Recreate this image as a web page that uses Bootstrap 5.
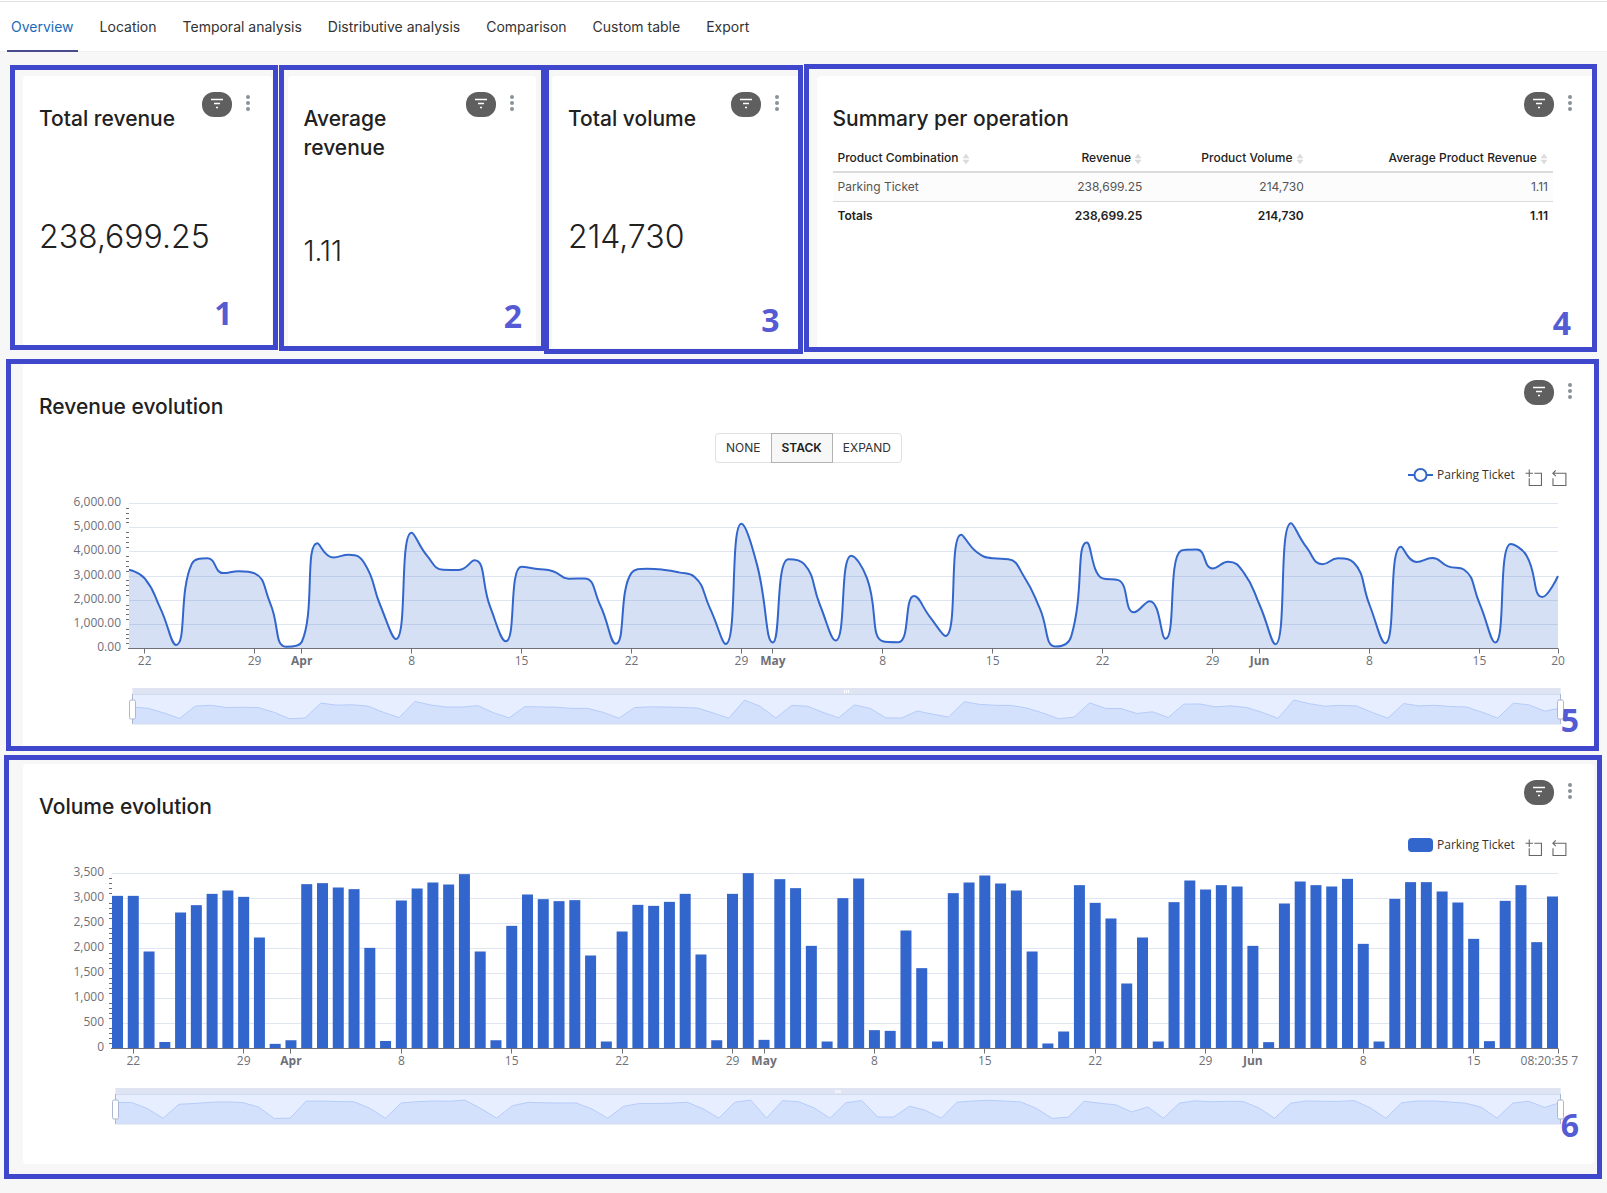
<!DOCTYPE html>
<html lang="en">
<head>
<meta charset="utf-8">
<meta name="viewport" content="width=device-width, initial-scale=1">
<title>Parking revenue dashboard</title>
<link href="https://cdn.jsdelivr.net/npm/bootstrap@5.3.0/dist/css/bootstrap.min.css" rel="stylesheet">
<style>
  body { font-family: Inter, sans-serif; font-size: 14px; background: #f7f7f7; color: #212121; border-top: 1px solid #fff; }
  .tabbar { background: #fff; border-top: 1px solid #e0e0e0; border-bottom: 1px solid #f0f0f0; padding: 0 7px; gap: 18px; height: 51px; }
  .tabbar .nav-link { color: #333; padding: 14px 4px 0; line-height: 22px; height: 50px; border-bottom: 2px solid transparent; border-radius: 0; }
  .tabbar .nav-link.active { color: #1a6bb8; border-bottom-color: #484c8c; }

  .board { padding: 24px 13px 29px 23px; grid-template-columns: repeat(6, minmax(0, 1fr)); }
  .tile { border: 0; border-radius: 4px; padding: 16px; }
  .tile-sm { min-height: 272px; }
  .span-3 { grid-column: span 3; }
  .span-6 { grid-column: span 6; }
  .tile-title { font-size: 21px; line-height: 29px; font-weight: 500; margin: 0; padding-top: 12px; }
  .filter-pill { width: 30px; height: 25px; border-radius: 12px; background: #5f5f5f; border: 0; padding: 0; }
  .dots-btn { width: 16px; height: 20px; border: 0; background: none; padding: 0; }
  .figure-lg { font-size: 32px; line-height: 40px; font-weight: 300; }
  .figure-md { font-size: 28px; line-height: 36px; font-weight: 300; }

  .summary { font-size: 12px; line-height: 18px; margin: 11px 0 0; width: calc(100% - 25px); table-layout: fixed; color: #212121; }
  .summary > :not(caption) > * > * { padding: 5px; background: none; border-bottom: 1px solid #dbdbdb; }
  .summary > thead > tr > th { font-weight: 500; border-bottom: 2px solid #dbdbdb; padding-bottom: 4px; white-space: nowrap; }
  .summary > tbody > tr > td { background: #fcfcfc; color: #555; }
  .summary > tfoot > tr > * { font-weight: 600; border-bottom: 0; }

  .mode-switch { margin-top: 12px; }
  .mode-switch .btn { font-size: 12px; line-height: 18px; padding: 5px 10px; border: 1px solid #e0e0e0; color: #333; border-radius: 4px; }
  .mode-switch .btn-check:checked + .btn { background: #f7f7f7; border-color: #b2b2b2; color: #212121; font-weight: 600; }

  .legend-row { height: 24px; padding-right: 11px; font-family: "Open Sans", sans-serif; font-size: 12px; line-height: 24px; color: #333; }
  .legend-row span { min-width: 80px; }
  .legend-gap { margin-top: 12px; }
  .tool-btn { border: 0; background: none; padding: 0; width: 17px; height: 17px; line-height: 0; margin-top: 5px; }
  .plot { width: 100%; overflow: hidden; font-family: "Open Sans", sans-serif; font-size: 12px; }
  .plot svg { display: block; }
  .plot text { fill: #6e7079; }
  .plot-area { height: 245px; }
  .plot-bars { height: 291px; }

  .callout { position: absolute; border: 5px solid #3f48cc; pointer-events: none; z-index: 2; }
  .callout b { position: absolute; font-family: "Open Sans", sans-serif; font-size: 32px; line-height: 24px; color: #555bd2; }
  .callout-1 { inset: -11px -6px -2px -13px; } .callout-1 b { right: 40px; bottom: 20px; }
  .callout-2 { inset: -11px -10px -3px -9px; } .callout-2 b { right: 19px; bottom: 18px; }
  .callout-3 { inset: -11px -2px -6px -8px; }  .callout-3 b { right: 18px; bottom: 17px; }
  .callout-4 { inset: -12px -3px -4px -13px; } .callout-4 b { right: 21px; bottom: 12px; }
  .callout-5 { inset: -5px -5px -3px -17px; }  .callout-5 b { right: 15px; bottom: 14px; }
  .callout-6 { inset: -9px -8px -15px -19px; } .callout-6 b { right: 18px; bottom: 37px; }
</style>
</head>
<body>

<svg class="d-none" aria-hidden="true">
  <symbol id="i-filter" viewBox="0 0 30 25"><path d="M9 7.5H21M12 11.5H18M14 15.5H16" stroke="#fff" stroke-width="1.3" fill="none"/></symbol>
  <symbol id="i-dots" viewBox="0 0 16 20"><g fill="#879399"><circle cx="8" cy="5" r="2"/><circle cx="8" cy="11" r="2"/><circle cx="8" cy="17" r="2"/></g></symbol>
  <symbol id="i-sort" viewBox="0 0 8 12"><path d="M4 1L7 5H1zM4 11L1 7H7z" fill="#dbdbdb" stroke="#dbdbdb" stroke-width=".6" stroke-linejoin="round"/></symbol>
  <symbol id="i-zoom" viewBox="-2 -2 62 62"><path d="M0,13.5h26.9 M13.5,26.9V0 M32.1,13.5H58V58H13.5 V32.1" fill="none" stroke="#666" stroke-width="4"/></symbol>
  <symbol id="i-reset" viewBox="-2 -2 62 62"><path d="M19,3L8.5,13.5l10.5,10.5 M8.9,13.5H56v44.5 H8.9v-26" fill="none" stroke="#666" stroke-width="4"/></symbol>
</svg>

<nav class="nav tabbar flex-nowrap" aria-label="Dashboard tabs">
  <a class="nav-link active" aria-current="page" href="#">Overview</a>
  <a class="nav-link" href="#">Location</a>
  <a class="nav-link" href="#">Temporal analysis</a>
  <a class="nav-link" href="#">Distributive analysis</a>
  <a class="nav-link" href="#">Comparison</a>
  <a class="nav-link" href="#">Custom table</a>
  <a class="nav-link" href="#">Export</a>
</nav>

<main class="board d-grid gap-3">
  <section class="card tile tile-sm">
    <div class="d-flex align-items-start">
      <h2 class="tile-title me-auto">Total revenue</h2>
      <button class="filter-pill" aria-label="Filters"><svg width="30" height="25" class="d-block"><use href="#i-filter"/></svg></button>
      <button class="dots-btn ms-2" aria-label="More"><svg width="16" height="20" class="d-block"><use href="#i-dots"/></svg></button>
    </div>
    <div class="flex-grow-1 d-flex align-items-center pt-2 figure-lg">238,699.25</div>
    <div class="callout callout-1"><b>1</b></div>
  </section>

  <section class="card tile tile-sm">
    <div class="d-flex align-items-start">
      <h2 class="tile-title me-auto">Average revenue</h2>
      <button class="filter-pill flex-shrink-0" aria-label="Filters"><svg width="30" height="25" class="d-block"><use href="#i-filter"/></svg></button>
      <button class="dots-btn ms-2" aria-label="More"><svg width="16" height="20" class="d-block"><use href="#i-dots"/></svg></button>
    </div>
    <div class="flex-grow-1 d-flex align-items-center pt-2 figure-md">1.11</div>
    <div class="callout callout-2"><b>2</b></div>
  </section>

  <section class="card tile tile-sm">
    <div class="d-flex align-items-start">
      <h2 class="tile-title me-auto">Total volume</h2>
      <button class="filter-pill" aria-label="Filters"><svg width="30" height="25" class="d-block"><use href="#i-filter"/></svg></button>
      <button class="dots-btn ms-2" aria-label="More"><svg width="16" height="20" class="d-block"><use href="#i-dots"/></svg></button>
    </div>
    <div class="flex-grow-1 d-flex align-items-center pt-2 figure-lg">214,730</div>
    <div class="callout callout-3"><b>3</b></div>
  </section>

  <section class="card tile tile-sm span-3">
    <div class="d-flex align-items-start">
      <h2 class="tile-title me-auto">Summary per operation</h2>
      <button class="filter-pill" aria-label="Filters"><svg width="30" height="25" class="d-block"><use href="#i-filter"/></svg></button>
      <button class="dots-btn ms-2" aria-label="More"><svg width="16" height="20" class="d-block"><use href="#i-dots"/></svg></button>
    </div>
    <table class="table summary">
      <colgroup><col style="width:24.7%"><col style="width:19%"><col style="width:22.4%"><col style="width:33.9%"></colgroup>
      <thead>
        <tr>
          <th scope="col">Product Combination <svg width="8" height="12"><use href="#i-sort"/></svg></th>
          <th scope="col" class="text-end">Revenue <svg width="8" height="12"><use href="#i-sort"/></svg></th>
          <th scope="col" class="text-end">Product Volume <svg width="8" height="12"><use href="#i-sort"/></svg></th>
          <th scope="col" class="text-end">Average Product Revenue <svg width="8" height="12"><use href="#i-sort"/></svg></th>
        </tr>
      </thead>
      <tbody>
        <tr><td>Parking Ticket</td><td class="text-end">238,699.25</td><td class="text-end">214,730</td><td class="text-end">1.11</td></tr>
      </tbody>
      <tfoot>
        <tr><th scope="row">Totals</th><td class="text-end">238,699.25</td><td class="text-end">214,730</td><td class="text-end">1.11</td></tr>
      </tfoot>
    </table>
    <div class="callout callout-4"><b>4</b></div>
  </section>

  <section class="card tile span-6">
    <div class="d-flex align-items-start">
      <h2 class="tile-title me-auto">Revenue evolution</h2>
      <button class="filter-pill" aria-label="Filters"><svg width="30" height="25" class="d-block"><use href="#i-filter"/></svg></button>
      <button class="dots-btn ms-2" aria-label="More"><svg width="16" height="20" class="d-block"><use href="#i-dots"/></svg></button>
    </div>
    <div class="btn-group mode-switch align-self-center" role="group" aria-label="Stack mode">
      <input type="radio" class="btn-check" name="mode" id="mode-none"><label class="btn" for="mode-none">NONE</label>
      <input type="radio" class="btn-check" name="mode" id="mode-stack" checked><label class="btn" for="mode-stack">STACK</label>
      <input type="radio" class="btn-check" name="mode" id="mode-expand"><label class="btn" for="mode-expand">EXPAND</label>
    </div>
    <div class="legend-row d-flex justify-content-end align-items-center">
      <svg width="25" height="14" class="me-1"><path d="M0 7H25" stroke="#36c" stroke-width="2"/><circle cx="12.5" cy="7" r="6" fill="#fff" stroke="#36c" stroke-width="2"/></svg>
      <span>Parking Ticket</span>
      <button class="tool-btn ms-2" aria-label="Area zoom"><svg width="17" height="17"><use href="#i-zoom"/></svg></button>
      <button class="tool-btn ms-2" aria-label="Restore area zoom"><svg width="17" height="17"><use href="#i-reset"/></svg></button>
    </div>
    <div class="plot plot-area" id="revenue"></div>
    <div class="callout callout-5"><b>5</b></div>
  </section>

  <section class="card tile span-6">
    <div class="d-flex align-items-start">
      <h2 class="tile-title me-auto">Volume evolution</h2>
      <button class="filter-pill" aria-label="Filters"><svg width="30" height="25" class="d-block"><use href="#i-filter"/></svg></button>
      <button class="dots-btn ms-2" aria-label="More"><svg width="16" height="20" class="d-block"><use href="#i-dots"/></svg></button>
    </div>
    <div class="legend-row legend-gap d-flex justify-content-end align-items-center">
      <svg width="25" height="14" class="me-1"><rect width="25" height="14" rx="4" fill="#36c"/></svg>
      <span>Parking Ticket</span>
      <button class="tool-btn ms-2" aria-label="Area zoom"><svg width="17" height="17"><use href="#i-zoom"/></svg></button>
      <button class="tool-btn ms-2" aria-label="Restore area zoom"><svg width="17" height="17"><use href="#i-reset"/></svg></button>
    </div>
    <div class="plot plot-bars" id="volume"></div>
    <div class="callout callout-6"><b>6</b></div>
  </section>
</main>

<script src="https://cdn.jsdelivr.net/npm/bootstrap@5.3.0/dist/js/bootstrap.bundle.min.js"></script>
<script>
// Daily values, 21 March to 20 June
const revenue = [3260,2900,1660,150,3500,3730,3120,3200,3110,1860,70,270,4350,3770,3880,3520,1790,390,4790,3820,3260,3250,3650,1720,300,3380,
  3290,3200,2890,2900,1800,200,3130,3300,3260,3150,2970,1660,190,5160,3450,250,3690,3490,1800,330,3840,2900,300,260,2170,1310,520,4710,3980,3730,
  3690,2970,1660,80,500,4390,2900,2830,1500,1960,400,4050,4100,3310,3590,3130,1800,180,5180,4170,3490,3730,3550,1800,220,4210,3580,3740,3400,3270,
  1870,250,4320,3840,2130,3000];
const volume = [3053,3053,1940,130,2720,2867,3093,3160,3033,2220,93,165,3287,3307,3220,3187,2013,150,2960,3200,3320,3280,3487,1940,165,2453,
  3080,2987,2947,2967,1860,140,2340,2873,2853,2933,3093,1880,165,3093,3507,173,3387,3207,2053,140,3007,3400,367,353,2360,1607,140,3107,3320,3460,
  3300,3160,1940,100,340,3267,2913,2600,1300,2220,140,2927,3360,3180,3267,3240,2053,127,2900,3340,3267,3240,3393,2093,140,2993,3327,3327,3140,2920,
  2193,147,2953,3267,2127,3040];
const dayTicks = [[1,'22'],[8,'29'],[11,'Apr'],[18,'8'],[25,'15'],[32,'22'],[39,'29'],[41,'May'],[48,'8'],[55,'15'],[62,'22'],[69,'29'],[72,'Jun'],[79,'8'],[86,'15']];
const TOP = 16.5;

function axes(o) {
  let s = '';
  for (let v = 0; v <= o.max; v += o.step) {
    const y = Math.round(o.y(v) - .5) + .5;
    if (v) s += `<path d="M${o.x0} ${y}H${o.x1}" stroke="#e0e6f1"/>`;
    s += `<text x="${o.x0 - 8}" y="${y + 2}" text-anchor="end">${o.format(v)}</text>`;
    if (v < o.max) for (let k = 1; k < 5; k++) {
      const m = Math.round(o.y(v + k * o.step / 5) - .5) + .5;
      s += `<path d="M${o.x0 - 3} ${m}h3" stroke="#6e7079"/>`;
    }
  }
  return s;
}
// A label wider than the right margin ends at the edge of the plot
function xAxis(o, lastLabel) {
  let s = `<path d="M${o.x0 - 1} ${o.base}H${o.x1}" stroke="#6e7079"/>`;
  dayTicks.concat([[null, lastLabel]]).forEach(([i, t]) => {
    const x = i === null ? o.x1 : o.x(i), px = Math.round(x - .5) + .5, atEdge = t.length > 3;
    s += `<path d="M${px} ${o.base}v5" stroke="#6e7079"/>`;
    s += `<text x="${atEdge ? o.x1 + 20 : x}" y="${o.base + 16}" text-anchor="${atEdge ? 'end' : 'middle'}"${/[A-Z]/.test(t) ? ' font-weight="700"' : ''}>${t}</text>`;
  });
  return s;
}
function slider(o, data) {
  const a = o.x0 + 3.5, b = o.x1 + 2.5, t = o.base + 39.5, h = 36, max = Math.max(...data);
  const pts = data.map((v, i) => `${a + i * (b - a) / (data.length - 1)} ${t + 31 - v / max * 19}`).join('L');
  const grip = x => `<path d="M${x} ${t + 6}V${t + h}" stroke="#acb8d1"/><rect x="${x - 3}" y="${t + 12}" width="6" height="19" rx="1.5" fill="#fff" stroke="#acb8d1"/>`;
  const c = (a + b) / 2;
  return `<rect x="${a}" y="${t}" width="${b - a}" height="${h}" fill="#e7eeff"/>
    <path d="M${a} ${t + h}L${pts}L${b} ${t + h}Z" fill="#d4e1fd"/><path d="M${pts}" fill="none" stroke="#b5ccfa"/>
    <path d="M${a} ${t + h}H${b}" stroke="#d2dbee"/>
    <rect x="${a}" y="${t}" width="${b - a}" height="7" fill="#dee4f2"/><path d="M${a} ${t + 6.5}H${b}" stroke="#d2dbee"/>
    <path d="M${c - 2} ${t + 2}v3m2 -3v3m2 -3v3" stroke="#fff"/>` + grip(a) + grip(b);
}
// Smooth curve whose control points stay between neighbouring samples
function smoothPath(p) {
  const clamp = (v, a, b) => Math.max(Math.min(v, Math.max(a, b)), Math.min(a, b));
  let d = `M${p[0]}`, c0 = p[0];
  for (let i = 1; i < p.length; i++) {
    const q = p[i], prev = p[i - 1], next = p[i + 1];
    let c1 = q, n0 = q;
    if (next) {
      const lp = Math.hypot(q[0] - prev[0], q[1] - prev[1]), ln = Math.hypot(next[0] - q[0], next[1] - q[1]);
      const r = ln / (ln + lp);
      n0 = [0, 1].map(k => clamp(q[k] + (next[k] - prev[k]) * .5 * r, next[k], q[k]));
      c1 = [0, 1].map(k => clamp(q[k] - (n0[k] - q[k]) * lp / ln, prev[k], q[k]));
      n0 = [0, 1].map(k => clamp(q[k] + (q[k] - c1[k]) * ln / lp, next[k], q[k]));
    }
    d += `C${c0} ${c1} ${q}`;
    c0 = n0;
  }
  return d;
}
function draw() {
  let el = document.getElementById('revenue'), w = el.clientWidth;
  let o = { x0: 90, x1: w - 20, base: 161.5, max: 6000, step: 1000, format: v => v.toLocaleString('en-US', { minimumFractionDigits: 2 }) };
  o.x = i => o.x0 + i * (o.x1 - o.x0) / 91;
  o.y = v => o.base - v / o.max * (o.base - TOP);
  const line = smoothPath(revenue.map((v, i) => [o.x(i), o.y(v)]));
  el.innerHTML = `<svg width="${w}" height="245">${axes(o)}<path d="${line}V${o.base}H${o.x0}Z" fill="#36c" fill-opacity=".2"/>
    <path d="${line}" fill="none" stroke="#36c" stroke-width="2"/>${xAxis(o, '20')}${slider(o, revenue)}</svg>`;

  el = document.getElementById('volume'); w = el.clientWidth;
  const v = { x0: 73, x1: w - 20, base: 191.5, max: 3500, step: 500, format: n => n.toLocaleString('en-US') };
  v.x = i => v.x0 + 5.5 + i * (v.x1 - v.x0 - 11) / 91;
  v.y = n => v.base - n / v.max * (v.base - TOP);
  const bars = volume.map((n, i) => `<rect x="${v.x(i) - 5.5}" y="${v.y(n)}" width="11" height="${v.base - v.y(n)}"/>`).join('');
  el.innerHTML = `<svg width="${w}" height="291">${axes(v)}<g fill="#36c">${bars}</g>${xAxis(v, '08:20:35 7')}${slider(v, volume)}</svg>`;
}
draw();
addEventListener('resize', draw);
</script>
</body>
</html>
